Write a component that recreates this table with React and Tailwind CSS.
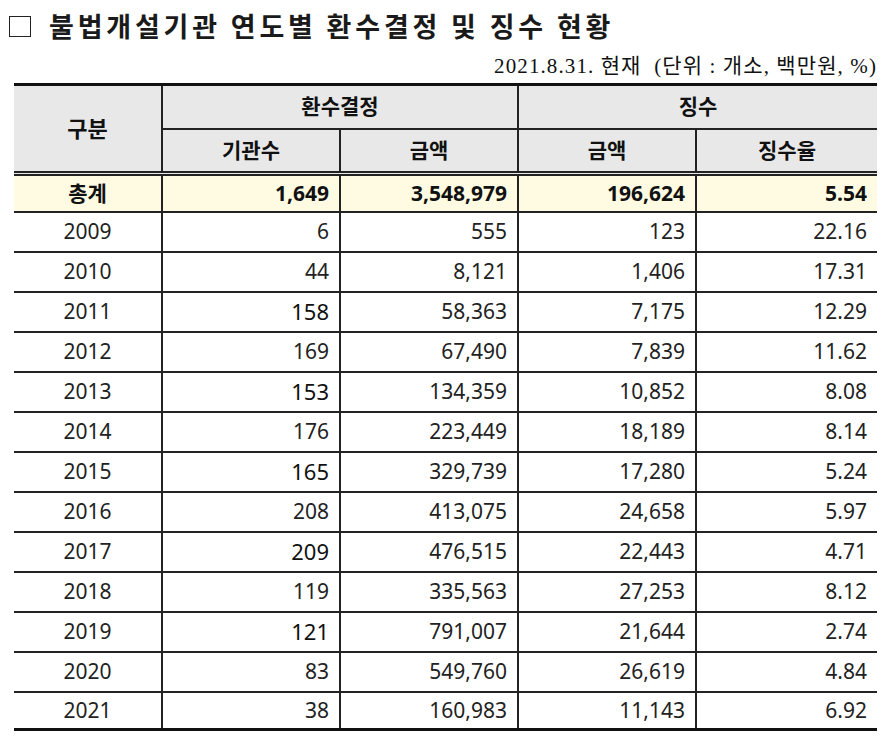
import React from 'react'

const rows = [
  ['2009', '6', '555', '123', '22.16'],
  ['2010', '44', '8,121', '1,406', '17.31'],
  ['2011', '158', '58,363', '7,175', '12.29', true],
  ['2012', '169', '67,490', '7,839', '11.62'],
  ['2013', '153', '134,359', '10,852', '8.08', true],
  ['2014', '176', '223,449', '18,189', '8.14'],
  ['2015', '165', '329,739', '17,280', '5.24', true],
  ['2016', '208', '413,075', '24,658', '5.97'],
  ['2017', '209', '476,515', '22,443', '4.71', true],
  ['2018', '119', '335,563', '27,253', '8.12'],
  ['2019', '121', '791,007', '21,644', '2.74', true],
  ['2020', '83', '549,760', '26,619', '4.84'],
  ['2021', '38', '160,983', '11,143', '6.92'],
]

const font = { fontFamily: '"Noto Sans", "Noto Sans CJK KR", sans-serif' }

const App = () => {
  return (
    <div className="w-[889px] h-[743px] bg-white text-[#222]" style={font}>
      <div className="flex items-center pl-[9px] pt-[6px] h-[44px]">
        <span className="w-[22px] h-[21px] border-[1.5px] border-[#222] mr-[18px] mt-[2px]"></span>
        <h1 className="text-[27px] leading-none font-bold tracking-[3.8px] text-[#1a1a1a]" style={{ fontFamily: '"Noto Sans CJK KR", sans-serif' }}>
          불법개설기관 연도별 환수결정 및 징수 현황
        </h1>
      </div>
      <div className="flex justify-end pr-[12px] pt-[12px] h-[39px]">
        <span className="text-[21px] leading-none tracking-[1.1px] text-[#111]" style={{ fontFamily: '"Liberation Serif", "Noto Sans CJK KR", serif' }}>
          2021.8.31. 현재 &nbsp;(단위 : 개소, 백만원, %)
        </span>
      </div>
      <table className="ml-[14px] w-[863px] table-fixed border-collapse text-[21px]">
        <colgroup>
          <col className="w-[148px]" />
          <col className="w-[178px]" />
          <col className="w-[178px]" />
          <col className="w-[178px]" />
          <col className="w-[181px]" />
        </colgroup>
        <thead className="bg-[#e8e8e8] font-bold text-[#111]">
          <tr className="h-[44px] border-t-[3px] border-[#111]">
            <th rowSpan={2} className="border-r-2 border-b-[5px] border-double border-[#222] text-[22px]">구분</th>
            <th colSpan={2} className="border-r-2 border-b-2 border-[#222]">환수결정</th>
            <th colSpan={2} className="border-b-2 border-[#222]">징수</th>
          </tr>
          <tr className="h-[45px]">
            <th className="border-r-2 border-b-[5px] border-double border-[#222]">기관수</th>
            <th className="border-r-2 border-b-[5px] border-double border-[#222]">금액</th>
            <th className="border-r-2 border-b-[5px] border-double border-[#222]">금액</th>
            <th className="border-b-[5px] border-double border-[#222]">징수율</th>
          </tr>
        </thead>
        <tbody>
          <tr className="h-[38px] bg-[#fffbe3] font-bold text-[#111]">
            <td className="text-center border-r-2 border-b-2 border-[#222]">총계</td>
            <td className="text-right pr-[10px] border-r-2 border-b-2 border-[#222]">1,649</td>
            <td className="text-right pr-[10px] border-r-2 border-b-2 border-[#222]">3,548,979</td>
            <td className="text-right pr-[10px] border-r-2 border-b-2 border-[#222]">196,624</td>
            <td className="text-right pr-[10px] border-b-2 border-[#222]">5.54</td>
          </tr>
          {rows.map((r, i) => {
            const last = i === rows.length - 1
            const bb = last ? 'border-b-[3px] border-[#111]' : 'border-b-2 border-[#222]'
            return (
              <tr key={r[0]} className={last ? 'h-[38px]' : 'h-[40px]'}>
                <td className={'text-center border-r-2 border-r-[#222] ' + bb}>{r[0]}</td>
                <td className={'text-right pr-[10px] border-r-2 border-r-[#222] ' + bb + (r[5] ? ' text-[22px] text-[#111]' : '')}>{r[1]}</td>
                <td className={'text-right pr-[10px] border-r-2 border-r-[#222] ' + bb}>{r[2]}</td>
                <td className={'text-right pr-[10px] border-r-2 border-r-[#222] ' + bb}>{r[3]}</td>
                <td className={'text-right pr-[10px] ' + bb}>{r[4]}</td>
              </tr>
            )
          })}
        </tbody>
      </table>
    </div>
  )
}

export default App
